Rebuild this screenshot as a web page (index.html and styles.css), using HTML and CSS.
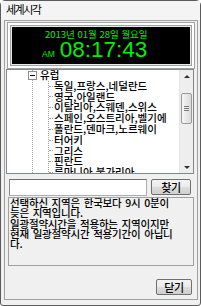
FILE: index.html
```html
<!DOCTYPE html>
<html lang="ko">
<head>
<meta charset="utf-8">
<link rel="stylesheet" href="styles.css">
</head>
<body>
<div class="window">
  <div class="titlebar">세계시각</div>
  <div class="panel">
    <div class="clock-frame">
      <div class="clock-inner">
        <div class="clock-display">
          <div class="clock-date">2013년 01월 28일 월요일</div>
          <div class="clock-time-row">
            <span class="clock-ampm">AM</span>
            <span class="clock-time">08:17:43</span>
          </div>
        </div>
      </div>
    </div>
    <div class="tree-box">
      <div class="tree-view">
        <ul class="tree-root">
          <li class="tree-node">
            <div class="tree-row root-row"><span class="expander"></span><span class="label">유럽</span></div>
            <ul class="tree-children">
              <li class="tree-row child-row"><span class="label">독일,프랑스,네덜란드</span></li>
              <li class="tree-row child-row"><span class="label">영국,아일랜드</span></li>
              <li class="tree-row child-row"><span class="label">이탈리아,스웨덴,스위스</span></li>
              <li class="tree-row child-row"><span class="label">스페인,오스트리아,벨기에</span></li>
              <li class="tree-row child-row"><span class="label">폴란드,덴마크,노르웨이</span></li>
              <li class="tree-row child-row"><span class="label">터어키</span></li>
              <li class="tree-row child-row"><span class="label">그리스</span></li>
              <li class="tree-row child-row"><span class="label">핀란드</span></li>
              <li class="tree-row child-row"><span class="label">루마니아,불가리아</span></li>
            </ul>
          </li>
        </ul>
      </div>
      <div class="scrollbar">
        <div class="sb-arrow sb-up"><span class="tri-up"></span></div>
        <div class="sb-track">
          <div class="sb-thumb"><span class="grip"></span></div>
        </div>
        <div class="sb-arrow sb-down"><span class="tri-down"></span></div>
      </div>
    </div>
    <div class="search-row">
      <div class="search-input"></div>
      <div class="btn btn-find">찾기</div>
    </div>
    <div class="info-box">선택하신 지역은 한국보다 9시 0분이<br>늦은 지역입니다.<br>일광절약시간을 적용하는 지역이지만<br>현재 일광절약시간 적용기간이 아닙니<br>다.</div>
    <div class="bottom-row">
      <div class="btn btn-close">닫기</div>
    </div>
  </div>
</div>
</body>
</html>
```

FILE: styles.css
```css
* { box-sizing: border-box; }
html, body { margin: 0; padding: 0; background: #ffffff; }
body { width: 201px; height: 306px; overflow: hidden; font-family: "Noto Sans CJK KR", "Noto Sans", sans-serif; color: #000; }

.window {
  width: 201px;
  height: 306px;
  border: 1px solid #5b5b5b;
  border-radius: 5px 5px 3px 3px;
  background: #f0f0f0;
  display: flex;
  flex-direction: column;
}

.titlebar {
  height: 19px;
  padding-left: 5px;
  font-size: 11px;
  line-height: 17px;
  background: #f4f4f4;
  color: #000;
  letter-spacing: -1.5px;
}

.panel {
  margin: 0 2px 5px 3px;
  flex: 1;
  border: 1px solid #a0a0a0;
  background: #f0f0f0;
  display: flex;
  flex-direction: column;
}

/* clock */
.clock-frame {
  margin: 1px 2px 0 2px;
  border: 1px solid #a0a0a0;
  padding: 2px;
  background: #ffffff;
}
.clock-inner {
  border: 1px solid #a0a0a0;
  padding: 1px;
  background: #e8e8e8;
}
.clock-display {
  height: 37px;
  background: #000;
  padding: 2px 0 0 0;
  display: flex;
  flex-direction: column;
  color: #00f000;
}
.clock-date {
  margin-left: 33px;
  font-size: 9.5px;
  line-height: 10px;
  height: 10px;
  white-space: nowrap;
  letter-spacing: 0;
}
.clock-time-row {
  margin-left: 30px;
  height: 22px;
  display: flex;
  align-items: baseline;
  gap: 5px;
}
.clock-ampm {
  font-family: "Liberation Sans", Arial, sans-serif;
  font-size: 8.5px;
  line-height: 22px;
}
.clock-time {
  font-family: "Liberation Sans", Arial, sans-serif;
  font-size: 22.5px;
  line-height: 22px;
}

/* tree */
.tree-box {
  margin: 0 3px 0 1px;
  height: 105px;
  border: 1px solid #828790;
  background: #ffffff;
  display: flex;
  overflow: hidden;
}
.tree-view {
  flex: 1;
  overflow: hidden;
}
.tree-root, .tree-children {
  list-style: none;
  margin: 0;
  padding: 0;
}
.tree-root {
  margin-left: 25px;
  border-left: 1px dotted #a0a0a0;
  height: 103px;
}
.tree-row {
  height: 10.8px;
  line-height: 10.8px;
  font-size: 10.5px;
  font-weight: 500;
  white-space: nowrap;
  display: flex;
  align-items: center;
}
.root-row { margin-left: -5px; }
.expander {
  width: 9px;
  height: 9px;
  border: 1px solid #919191;
  background: #fff linear-gradient(#000, #000) center / 5px 1px no-repeat;
  flex: none;
}
.root-row .label {
  margin-left: 2px;
  padding-left: 1px;
}
.tree-children {
  margin-left: 15px;
  border-left: 1px dotted #a0a0a0;
}
.child-row::before {
  content: "";
  width: 4px;
  border-top: 1px dotted #a0a0a0;
  margin-right: 1px;
  flex: none;
}
.label { letter-spacing: 0; }

/* scrollbar */
.scrollbar {
  width: 14px;
  flex: none;
  background: #eeeeee;
  border-left: 1px solid #e4e4e4;
  display: flex;
  flex-direction: column;
}
.sb-arrow {
  height: 12px;
  display: flex;
  align-items: center;
  justify-content: center;
}
.sb-track { flex: 1; padding-top: 11px; }
.tri-up, .tri-down {
  width: 0; height: 0;
  border-left: 3px solid transparent;
  border-right: 3px solid transparent;
}
.tri-up { border-bottom: 3px solid #303030; }
.tri-down { border-top: 3px solid #303030; }
.sb-thumb {
  margin: 0 1px;
  height: 31px;
  border: 1px solid #9a9a9a;
  border-radius: 2px;
  background: linear-gradient(to right, #f6f6f6, #e8e8e8 50%, #dadada);
  display: flex;
  align-items: center;
  justify-content: center;
}
.grip {
  width: 5px;
  height: 5px;
  background: repeating-linear-gradient(#7a7a7a 0 1px, transparent 1px 2px);
}

/* search */
.search-row {
  margin: 5px 5px 0 4px;
  display: flex;
  align-items: flex-start;
  gap: 4px;
  height: 17px;
}
.search-input {
  width: 138px;
  height: 17px;
  background: #fff;
  border: 1px solid #abadb3;
  border-top-color: #6e6e6e;
  border-left-color: #8a8a8a;
}
.btn {
  height: 16px;
  border: 1px solid #707070;
  border-radius: 2px;
  background: linear-gradient(#f2f2f2, #ebebeb 50%, #dddddd 51%, #cfcfcf);
  font-size: 11px;
  font-weight: 500;
  line-height: 14px;
  text-align: center;
  letter-spacing: -0.3px;
}
.btn-find { width: 40px; }

/* info text */
.info-box {
  margin: 1px 3px 0 3px;
  height: 69px;
  border: 1px solid #a0a0a0;
  padding: 0 0 0 1px;
  font-size: 10.5px;
  font-weight: 500;
  line-height: 10.3px;
  white-space: nowrap;
  letter-spacing: -0.2px;
  word-spacing: 1px;
  overflow: hidden;
}

.bottom-row {
  margin: 13px 5px 0 0;
  display: flex;
  justify-content: flex-end;
}
.btn-close { width: 36px; }
```
